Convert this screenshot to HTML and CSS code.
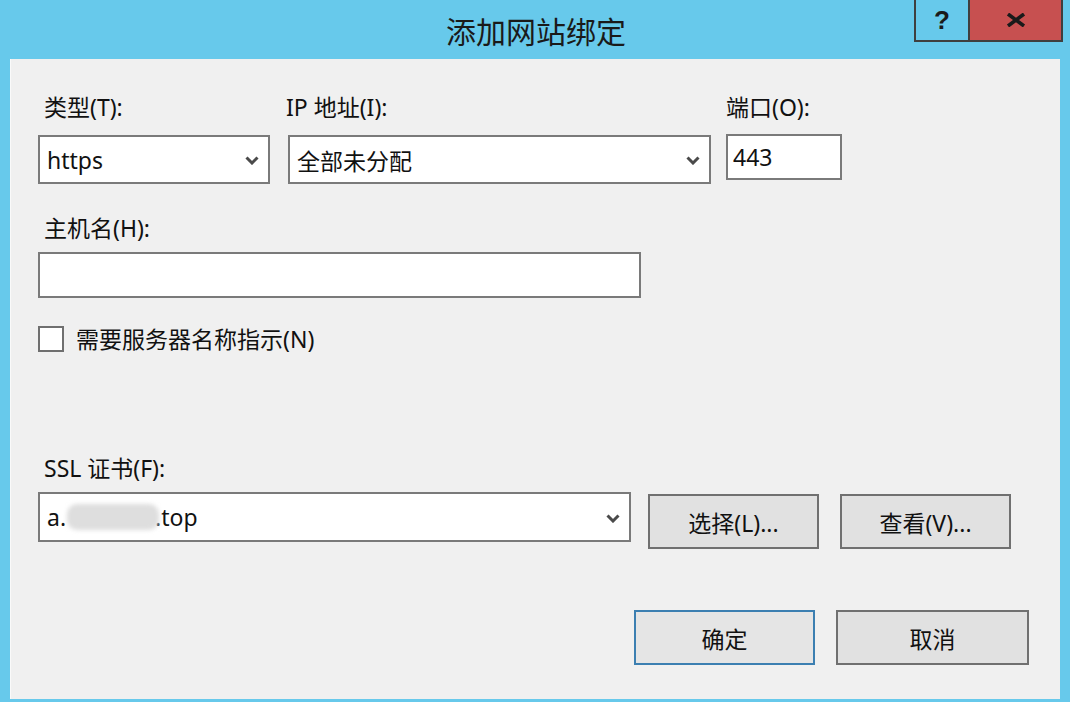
FILE: index.html
```html
<!DOCTYPE html>
<html lang="zh-CN">
<head>
    <meta charset="utf-8">
    <title>添加网站绑定</title>
    <link rel="stylesheet" href="styles.css">
</head>
<body>
    <div class="window">
        <div class="titlebar">
            <div class="title">添加网站绑定</div>
            <div class="caption">
                <div class="cap-btn help">?</div>
                <div class="cap-btn close">
                    <svg width="20" height="14" viewBox="0 0 20 14">
                        <path d="M2 1 L18 13 M18 1 L2 13" stroke="#1a1a1a" stroke-width="3.6" fill="none"/>
                    </svg>
                </div>
            </div>
        </div>

        <div class="client">
            <div class="row row-top">
                <div class="field f-type">
                    <div class="label indent">类型(T):</div>
                    <div class="select">
                        <span>https</span>
                        <svg class="chev" width="14" height="9" viewBox="0 0 14 9"><polyline points="1.5,1.5 7,7 12.5,1.5" fill="none" stroke="#4a4a4a" stroke-width="3"/></svg>
                    </div>
                </div>
                <div class="field f-ip">
                    <div class="label ip-label">IP 地址(I):</div>
                    <div class="select">
                        <span>全部未分配</span>
                        <svg class="chev" width="14" height="9" viewBox="0 0 14 9"><polyline points="1.5,1.5 7,7 12.5,1.5" fill="none" stroke="#4a4a4a" stroke-width="3"/></svg>
                    </div>
                </div>
                <div class="field f-port">
                    <div class="label port-label">端口(O):</div>
                    <div class="textbox port">443</div>
                </div>
            </div>

            <div class="field f-host">
                <div class="label indent">主机名(H):</div>
                <div class="textbox host"></div>
            </div>

            <div class="check-row">
                <div class="checkbox"></div>
                <span class="check-text">需要服务器名称指示(N)</span>
            </div>

            <div class="field f-ssl">
                <div class="label indent">SSL 证书(F):</div>
                <div class="ssl-row">
                    <div class="select ssl">
                        <span>a.<span class="blur"></span>.top</span>
                        <svg class="chev" width="14" height="9" viewBox="0 0 14 9"><polyline points="1.5,1.5 7,7 12.5,1.5" fill="none" stroke="#4a4a4a" stroke-width="3"/></svg>
                    </div>
                    <div class="button pick">选择(L)...</div>
                    <div class="button view">查看(V)...</div>
                </div>
            </div>

            <div class="footer">
                <div class="button ok">确定</div>
                <div class="button cancel">取消</div>
            </div>
        </div>
    </div>
</body>
</html>
```

FILE: styles.css
```css
* {
    margin: 0;
    padding: 0;
    box-sizing: border-box;
}

:root {
    --frame: #67c9eb;
    --face: #f0f0f0;
    --btn-face: #e1e1e1;
    --edge: #7a7a7a;
    --text: #111;
}

body {
    width: 1070px;
    height: 702px;
    overflow: hidden;
    background-color: var(--frame);
    font-family: "Noto Sans", "Noto Sans CJK SC", sans-serif;
    color: var(--text);
}

.window {
    height: 702px;
    display: flex;
    flex-direction: column;
}

.titlebar {
    position: relative;
    height: 59px;
    display: flex;
    align-items: center;
    justify-content: center;
}

.title {
    font-family: "Noto Sans CJK SC", sans-serif;
    font-size: 30px;
    line-height: 36px;
    color: #1a1a1a;
    padding-left: 2px;
}

.caption {
    position: absolute;
    top: 0;
    right: 7px;
    display: flex;
    border: 2px solid #3f3f3f;
    border-top: none;
}

.cap-btn {
    height: 40px;
    display: flex;
    align-items: center;
    justify-content: center;
}

.help {
    width: 54px;
    border-right: 2px solid #3f3f3f;
    font-family: "Liberation Sans", sans-serif;
    font-weight: bold;
    font-size: 26px;
    color: #1a1a1a;
}

.close {
    width: 91px;
    background-color: #c75050;
}

.client {
    margin: 0 10px;
    height: 640px;
    background-color: var(--face);
    border-left: 1px solid #fafafa;
    padding-left: 27px;
}

.label {
    font-size: 23px;
    line-height: 26px;
    height: 26px;
    white-space: nowrap;
}

.indent {
    padding-left: 6px;
}

.ip-label {
    margin-left: -2px;
}

.row-top {
    display: flex;
    align-items: flex-start;
    padding-top: 35px;
}

.row-top .label {
    margin-bottom: 15px;
}

.f-type {
    width: 232px;
}

.f-ip {
    width: 423px;
    margin-left: 18px;
}

.f-port {
    width: 116px;
    margin-left: 15px;
}

.row-top .port-label {
    margin-bottom: 14px;
}

.select {
    height: 49px;
    background-color: #fff;
    border: 2px solid var(--edge);
    display: flex;
    align-items: center;
    justify-content: space-between;
    padding: 0 9px 0 7px;
    font-size: 23px;
    white-space: nowrap;
}

.chev {
    flex-shrink: 0;
    margin-top: 2px;
}

.textbox {
    height: 46px;
    background-color: #fff;
    border: 2px solid var(--edge);
    display: flex;
    align-items: center;
    padding-left: 5px;
    font-size: 23px;
}

.f-host {
    margin-top: 31px;
}

.f-host .label,
.f-ssl .label {
    margin-bottom: 11px;
}

.host {
    width: 603px;
}

.check-row {
    margin-top: 28px;
    height: 26px;
    display: flex;
    align-items: center;
}

.checkbox {
    width: 26px;
    height: 26px;
    background-color: #fff;
    border: 2px solid #6f6f6f;
}

.check-text {
    margin-left: 12px;
    font-size: 23px;
    line-height: 26px;
}

.f-ssl {
    margin-top: 103px;
}

.ssl-row {
    display: flex;
    align-items: flex-start;
}

.ssl {
    width: 593px;
    height: 50px;
}

.blur {
    display: inline-block;
    width: 92px;
    height: 26px;
    margin: 0 -4px 0 1px;
    vertical-align: -4px;
    background-color: #dedede;
    border-radius: 10px;
    filter: blur(2px);
}

.button {
    height: 55px;
    background-color: var(--btn-face);
    border: 2px solid #707070;
    display: flex;
    align-items: center;
    justify-content: center;
    font-size: 23px;
}

.pick {
    width: 171px;
    margin: 2px 0 0 17px;
}

.view {
    width: 171px;
    margin: 2px 0 0 21px;
}

.footer {
    display: flex;
    justify-content: flex-end;
    gap: 21px;
    margin-top: 61px;
    padding-right: 31px;
}

.ok {
    width: 181px;
    border-color: #3c7fb1;
    background-color: #e5e5e5;
}

.cancel {
    width: 193px;
}
```
